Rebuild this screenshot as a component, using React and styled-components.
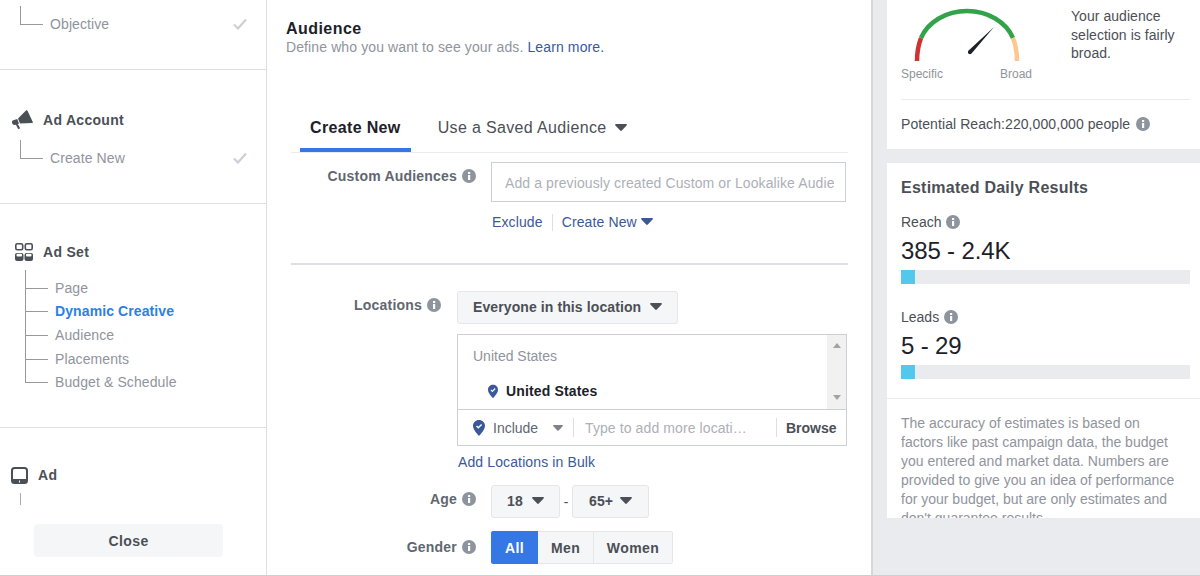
import React from "react";
import styled, { createGlobalStyle } from "styled-components";

const GlobalStyle = createGlobalStyle`
  html, body {
    margin: 0;
    padding: 0;
    height: 576px;
    overflow: hidden;
    background: #fff;
    font-family: "Liberation Sans", Arial, sans-serif;
    font-size: 14px;
  }
  * { box-sizing: border-box; }
`;

const Page = styled.div`
  display: flex;
  width: 1200px;
  height: 576px;
  border-bottom: 1px solid #ccd0d5;
  overflow: hidden;
`;

/* left steps column */
const Sidebar = styled.aside`
  width: 267px;
  flex: none;
  border-right: 1px solid #dddfe2;
`;

const Section = styled.section`
  height: ${(props) => props.$height}px;
  padding-top: ${(props) => props.$top}px;
  border-bottom: ${(props) => (props.$last ? "none" : "1px solid #dddfe2")};
`;

const StepHead = styled.div`
  display: flex;
  align-items: center;
  height: 20px;
  padding-left: ${(props) => props.$left}px;
  gap: ${(props) => props.$gap}px;
  font-size: 14px;
  font-weight: 700;
  letter-spacing: 0.3px;
  color: #4b4f56;
`;

const Tree = styled.div`
  margin-top: ${(props) => props.$top || 0}px;
  padding-left: ${(props) => props.$left}px;
`;

const TreeRow = styled.div`
  display: flex;
  height: ${(props) => props.$step}px;
`;

const Elbow = styled.span`
  width: 23px;
  flex: none;
  border-left: 1px solid #999;
  border-bottom: 1px solid #999;
`;

const TreeLabel = styled.span`
  align-self: flex-end;
  flex: 1;
  display: flex;
  justify-content: space-between;
  align-items: center;
  height: 18px;
  margin-bottom: -8px;
  padding-left: ${(props) => props.$indent}px;
  padding-right: ${(props) => (props.$check ? 19 : 0)}px;
  color: ${(props) => (props.$active ? "#2c7fe5" : "#90949c")};
  font-weight: ${(props) => (props.$active ? 700 : 400)};
  letter-spacing: 0.1px;
`;

const Stub = styled.div`
  width: 1px;
  height: 12px;
  margin: 8px 0 0 20px;
  background: #aaa;
`;

const CloseButton = styled.div`
  display: flex;
  align-items: center;
  justify-content: center;
  width: 189px;
  height: 33px;
  margin: 19px 0 0 34px;
  border-radius: 4px;
  background: #f5f6f7;
  font-weight: 700;
  letter-spacing: 0.4px;
  color: #4b4f56;
`;

/* middle form */
const Main = styled.main`
  width: 604px;
  flex: none;
  padding: 19px 23px 0 24px;
`;

const Title = styled.h2`
  margin: 0 0 0 -5px;
  font-size: 16px;
  line-height: 20px;
  font-weight: 700;
  letter-spacing: 0.45px;
  color: #1d2129;
`;

const Subtitle = styled.p`
  margin: -1px 0 0 -5px;
  line-height: 18px;
  letter-spacing: 0.11px;
  color: #90949c;
`;

const Link = styled.a`
  display: inline-flex;
  align-items: center;
  gap: 4px;
  letter-spacing: 0.12px;
  color: #3b5998;
`;

const Tabs = styled.nav`
  display: flex;
  align-items: stretch;
  gap: 17px;
  margin-top: 49px;
  padding-left: 9px;
  border-bottom: 1px solid #e9ebee;
`;

const Tab = styled.div`
  display: flex;
  align-items: center;
  gap: 8px;
  height: 47px;
  padding: 2px 10px 0;
  border-bottom: 4px solid ${(props) => (props.$active ? "#3578e5" : "transparent")};
  font-size: 16px;
  letter-spacing: 0.35px;
  font-weight: ${(props) => (props.$active ? 700 : 400)};
  color: ${(props) => (props.$active ? "#1d2129" : "#4b4f56")};
`;

const Field = styled.div`
  display: flex;
  align-items: flex-start;
  margin-top: ${(props) => props.$top}px;
`;

const FieldLabel = styled.div`
  display: flex;
  align-items: center;
  justify-content: flex-end;
  gap: 5px;
  width: ${(props) => props.$width}px;
  height: 20px;
  flex: none;
  margin-top: ${(props) => props.$offset || 4}px;
  margin-right: ${(props) => props.$gap}px;
  font-size: 14px;
  font-weight: 700;
  letter-spacing: 0.2px;
  color: #606770;
`;

const Control = styled.div`
  display: flex;
  flex-direction: column;
  align-items: flex-start;
`;

const TextBox = styled.div`
  width: 355px;
  height: 40px;
  padding: 1px 11px 0 13px;
  border: 1px solid #c9d0dc;
  line-height: 38px;
`;

const TextClip = styled.div`
  white-space: nowrap;
  overflow: hidden;
  letter-spacing: 0.1px;
  color: #adb0b6;
`;

const LinkRow = styled.div`
  display: flex;
  align-items: center;
  height: 20px;
  margin-top: 10px;
  padding-left: 1px;
`;

const LinkSep = styled.span`
  width: 1px;
  height: 17px;
  margin: 0 9px;
  background: #dddfe2;
`;

const FormRule = styled.hr`
  height: 2px;
  margin: 31px 0 0;
  border: none;
  background: #dddfe2;
`;

const SelectButton = styled.div`
  display: flex;
  align-items: center;
  justify-content: space-between;
  width: ${(props) => props.$width}px;
  height: 33px;
  padding: 0 ${(props) => props.$pad}px 1px;
  border: 1px solid #e4e6e9;
  border-radius: 3px;
  background: #f5f6f7;
  font-weight: 700;
  letter-spacing: 0.1px;
  color: #4b4f56;
`;

const LocationBox = styled.div`
  width: 390px;
  height: 112px;
  margin-top: 10px;
  border: 1px solid #ccd0d5;
  border-bottom-color: #c9d0dc;
`;

const LocationTop = styled.div`
  display: flex;
  height: 75px;
  border-bottom: 1px solid #ccd0d5;
`;

const LocationList = styled.div`
  flex: 1;
  padding: 13px 0 0 15px;
`;

const ListCaption = styled.div`
  line-height: 16px;
  color: #90949c;
`;

const ListItem = styled.div`
  display: flex;
  align-items: center;
  gap: 8px;
  height: 18px;
  margin-top: 18px;
  padding-left: 15px;
  font-weight: 700;
  letter-spacing: 0.15px;
  color: #1d2129;
`;

const Scrollbar = styled.div`
  display: flex;
  flex-direction: column;
  align-items: center;
  justify-content: space-between;
  width: 19px;
  padding: 8px 0 9px;
  background: #f1f1f1;
`;

const LocationBottom = styled.div`
  display: flex;
  align-items: center;
  height: 35px;
  padding-left: 15px;
  color: #606770;
`;

const IncludeLabel = styled.span`
  margin-left: 8px;
  width: 60px;
`;

const RowSep = styled.span`
  width: 1px;
  height: 19px;
  margin: ${(props) => props.$margin};
  background: #dddfe2;
`;

const Placeholder = styled.span`
  width: 165px;
  white-space: nowrap;
  overflow: hidden;
  text-overflow: ellipsis;
  letter-spacing: 0.1px;
  color: #adb0b6;
`;

const Browse = styled.span`
  font-weight: 700;
  color: #4b4f56;
`;

const BulkLink = styled(Link)`
  height: 20px;
  margin: 6px 0 0 1px;
`;

const AgeRow = styled.div`
  display: flex;
  align-items: center;
`;

const Dash = styled.span`
  width: 12px;
  text-align: center;
  color: #4b4f56;
`;

const Segments = styled.div`
  display: flex;
  height: 33px;
  border-radius: 3px;
  overflow: hidden;
`;

const Segment = styled.div`
  display: flex;
  align-items: center;
  justify-content: center;
  width: ${(props) => props.$width}px;
  border: 1px solid ${(props) => (props.$active ? "#3578e5" : "#e4e6e9")};
  border-left-width: ${(props) => (props.$active ? 1 : 0)}px;
  background: ${(props) => (props.$active ? "#3578e5" : "#f5f6f7")};
  font-weight: 700;
  letter-spacing: 0.4px;
  color: ${(props) => (props.$active ? "#fff" : "#4b4f56")};
`;

/* right summary column */
const Summary = styled.aside`
  flex: 1;
  padding-left: 14px;
  border-left: 2px solid #d5d7db;
  background: #e9ebee;
`;

const Card = styled.div`
  height: ${(props) => props.$height}px;
  margin-bottom: 14px;
  background: #fff;
  overflow: hidden;
`;

const GaugeRow = styled.div`
  display: flex;
  height: 100px;
  margin: 0 10px 0 14px;
  border-bottom: 1px solid #e9ebee;
`;

const GaugeCol = styled.div`
  width: 130px;
  flex: none;
`;

const GaugeLabels = styled.div`
  display: flex;
  justify-content: space-between;
  width: 131px;
  margin-top: 1px;
  font-size: 12px;
  line-height: 14px;
  color: #90949c;
`;

const GaugeText = styled.p`
  margin: 7px 0 0 40px;
  font-size: 14px;
  line-height: 18.5px;
  letter-spacing: 0.05px;
  color: #4b4f56;
`;

const ReachLine = styled.div`
  display: flex;
  align-items: center;
  gap: 6px;
  height: 48px;
  padding-left: 14px;
  letter-spacing: 0.08px;
  color: #4b4f56;
`;

const CardTitle = styled.h3`
  margin: 0;
  padding: 15px 0 0 14px;
  font-size: 16px;
  line-height: 20px;
  font-weight: 700;
  letter-spacing: 0.25px;
  color: #4b4f56;
`;

const Metric = styled.div`
  padding: ${(props) => props.$top}px 10px 0 14px;
`;

const MetricLabel = styled.div`
  display: flex;
  align-items: center;
  gap: 5px;
  line-height: 16px;
  color: #4b4f56;
`;

const MetricValue = styled.div`
  margin-top: 6px;
  font-size: 24px;
  line-height: 30px;
  letter-spacing: -0.15px;
  color: #1d2129;
`;

const Bar = styled.div`
  height: 14px;
  margin-top: 4px;
  background: #e9ebee;
`;

const BarFill = styled.div`
  width: 14px;
  height: 100%;
  background: #54c7ec;
`;

const Note = styled.p`
  margin: 19px 0 0;
  padding: 15px 19px 0 14px;
  border-top: 1px solid #e9ebee;
  line-height: 19px;
  color: #90949c;
`;

const Info = () => (
  <svg width="14" height="14" viewBox="0 0 14 14" style={{ flex: "none" }}>
    <circle cx="7" cy="7" r="7" fill="#8d949e" />
    <rect x="6" y="6" width="2.2" height="5" fill="#fff" />
    <rect x="6" y="3" width="2.2" height="2" fill="#fff" />
  </svg>
);

const Caret = ({ color = "#4b4f56", width = 12 }) => (
  <svg width={width} height={width * 0.6} viewBox="0 0 12 7.2" style={{ flex: "none" }}>
    <path d="M1 0h10c1 0 1.2.8.6 1.4L6.8 6.6c-.4.5-1.2.5-1.6 0L.4 1.4C-.2.8 0 0 1 0z" fill={color} />
  </svg>
);

const Check = () => (
  <svg width="14" height="12" viewBox="0 0 14 12">
    <path d="M1 6.500l4 4L13 1.500" fill="none" stroke="#ccd0d5" strokeWidth="2.2" />
  </svg>
);

const Pin = ({ width = 12, height = 16 }) => (
  <svg width={width} height={height} viewBox="0 0 12 16" style={{ flex: "none" }}>
    <path d="M6 0C2.700 0 0 2.500 0 5.800 0 9.600 4 13.600 6 16c2-2.400 6-6.400 6-10.200C12 2.500 9.300 0 6 0z" fill="#3b5998" />
    <path d="M3.500 6l1.800 1.800L8.600 4.400" fill="none" stroke="#fff" strokeWidth="1.400" />
  </svg>
);

const Megaphone = () => (
  <svg width="21" height="20" viewBox="0 0 21 20" style={{ flex: "none" }}>
    <path d="M14 0.500c.6-.5 1.300-.3 1.600.4L20.800 12c.2.600-.2 1-.8 1L8 13.500 6 8.500z" fill="#4b4f56" />
    <path d="M5.200 9L7 13.500 5.500 14.200l.9.800 1.700 3.300-1.800 1-2.400-4.500-1.400.2C1.200 14.800.3 13.900 0 12.700-.2 11.600.3 10.700 1.300 10.300z" fill="#4b4f56" />
  </svg>
);

const GridIcon = () => (
  <svg width="18" height="18" viewBox="0 0 18 18" style={{ flex: "none" }}>
    <g fill="none" stroke="#4b4f56" strokeWidth="1.600">
      <rect x="0.800" y="0.800" width="6.900" height="6" rx="1.500" />
      <rect x="10.300" y="0.800" width="6.900" height="6" rx="1.500" />
    </g>
    <rect x="0" y="10" width="8.500" height="8" rx="2" fill="#4b4f56" />
    <rect x="9.500" y="10" width="8.500" height="8" rx="2" fill="#4b4f56" />
    <rect x="1.500" y="10.800" width="5.500" height="2.600" rx="1" fill="#fff" />
    <rect x="11" y="10.800" width="5.500" height="2.600" rx="1" fill="#fff" />
  </svg>
);

const TabletIcon = () => (
  <svg width="17" height="17" viewBox="0 0 17 17" style={{ flex: "none" }}>
    <rect x="1" y="1" width="15" height="15" rx="2.500" fill="none" stroke="#4b4f56" strokeWidth="2" />
    <rect x="1" y="12" width="15" height="4" rx="1" fill="#4b4f56" />
    <rect x="8" y="13.500" width="1" height="2" fill="#fff" />
  </svg>
);

const ArrowUp = () => (
  <svg width="8" height="5" viewBox="0 0 8 5"><path d="M4 0l4 5H0z" fill="#a3a3a3" /></svg>
);

const ArrowDown = () => (
  <svg width="8" height="5" viewBox="0 0 8 5"><path d="M4 5l4-5H0z" fill="#a3a3a3" /></svg>
);

const Gauge = () => (
  <svg width="130" height="66" viewBox="0 0 130 66" style={{ display: "block" }}>
    <g fill="none" strokeWidth="4.500">
      <path d="M16 61C16 54 17 46 20 38" stroke="#d03232" />
      <path d="M20 38C27 22 45 11 66 11S105 22 112 38" stroke="#33a34a" />
      <path d="M112 38C115 46 116 54 116 61" stroke="#fdc88f" />
    </g>
    <path d="M93 27L70.500 53.500C69 55 66.500 54 67 51.500 67.500 50.500 68 50 69 49.300z" fill="#1d2129" />
  </svg>
);

const App = () => {
  return (
    <>
      <GlobalStyle />
      <Page>
        <Sidebar>
          <Section $height={70} $top={6}>
            <Tree $left={20}>
              <TreeRow $step={19}>
                <Elbow />
                <TreeLabel $indent={7} $check>
                  Objective <Check />
                </TreeLabel>
              </TreeRow>
            </Tree>
          </Section>
          <Section $height={134} $top={40}>
            <StepHead $left={12} $gap={10}>
              <Megaphone /> Ad Account
            </StepHead>
            <Tree $left={20} $top={10}>
              <TreeRow $step={19}>
                <Elbow />
                <TreeLabel $indent={7} $check>
                  Create New <Check />
                </TreeLabel>
              </TreeRow>
            </Tree>
          </Section>
          <Section $height={224} $top={38}>
            <StepHead $left={15} $gap={10}>
              <GridIcon /> Ad Set
            </StepHead>
            <Tree $left={25} $top={8}>
              <TreeRow $step={19}>
                <Elbow />
                <TreeLabel $indent={7}>Page</TreeLabel>
              </TreeRow>
              <TreeRow $step={23}>
                <Elbow />
                <TreeLabel $indent={7} $active>Dynamic Creative</TreeLabel>
              </TreeRow>
              <TreeRow $step={24}>
                <Elbow />
                <TreeLabel $indent={7}>Audience</TreeLabel>
              </TreeRow>
              <TreeRow $step={24}>
                <Elbow />
                <TreeLabel $indent={7}>Placements</TreeLabel>
              </TreeRow>
              <TreeRow $step={23}>
                <Elbow />
                <TreeLabel $indent={7}>Budget &amp; Schedule</TreeLabel>
              </TreeRow>
            </Tree>
          </Section>
          <Section $height={147} $top={37} $last>
            <StepHead $left={11} $gap={10}>
              <TabletIcon /> Ad
            </StepHead>
            <Stub />
            <CloseButton>Close</CloseButton>
          </Section>
        </Sidebar>

        <Main>
          <Title>Audience</Title>
          <Subtitle>
            Define who you want to see your ads. <Link>Learn more.</Link>
          </Subtitle>

          <Tabs>
            <Tab $active>Create New</Tab>
            <Tab>
              Use a Saved Audience <Caret />
            </Tab>
          </Tabs>

          <Field $top={9}>
            <FieldLabel $width={185} $gap={15}>
              Custom Audiences <Info />
            </FieldLabel>
            <Control>
              <TextBox>
                <TextClip>Add a previously created Custom or Lookalike Audience</TextClip>
              </TextBox>
              <LinkRow>
                <Link>Exclude</Link>
                <LinkSep />
                <Link>
                  Create New <Caret color="#3b5998" />
                </Link>
              </LinkRow>
            </Control>
          </Field>

          <FormRule />

          <Field $top={26}>
            <FieldLabel $width={150} $gap={16}>
              Locations <Info />
            </FieldLabel>
            <Control>
              <SelectButton $width={221} $pad={15}>
                Everyone in this location <Caret />
              </SelectButton>
              <LocationBox>
                <LocationTop>
                  <LocationList>
                    <ListCaption>United States</ListCaption>
                    <ListItem>
                      <Pin width={10} height={15} /> United States
                    </ListItem>
                  </LocationList>
                  <Scrollbar>
                    <ArrowUp />
                    <ArrowDown />
                  </Scrollbar>
                </LocationTop>
                <LocationBottom>
                  <Pin />
                  <IncludeLabel>Include</IncludeLabel>
                  <Caret color="#7f8389" width={10} />
                  <RowSep $margin="0 11px 0 10px" />
                  <Placeholder>Type to add more locations</Placeholder>
                  <RowSep $margin="0 9px 0 26px" />
                  <Browse>Browse</Browse>
                </LocationBottom>
              </LocationBox>
              <BulkLink>Add Locations in Bulk</BulkLink>
            </Control>
          </Field>

          <Field $top={13}>
            <FieldLabel $width={185} $gap={15}>
              Age <Info />
            </FieldLabel>
            <AgeRow>
              <SelectButton $width={69} $pad={15}>
                18 <Caret />
              </SelectButton>
              <Dash>-</Dash>
              <SelectButton $width={77} $pad={16}>
                65+ <Caret />
              </SelectButton>
            </AgeRow>
          </Field>

          <Field $top={13}>
            <FieldLabel $width={185} $gap={15} $offset={6}>
              Gender <Info />
            </FieldLabel>
            <Segments>
              <Segment $width={47} $active>All</Segment>
              <Segment $width={56}>Men</Segment>
              <Segment $width={79}>Women</Segment>
            </Segments>
          </Field>
        </Main>

        <Summary>
          <Card $height={149}>
            <GaugeRow>
              <GaugeCol>
                <Gauge />
                <GaugeLabels>
                  <span>Specific</span>
                  <span>Broad</span>
                </GaugeLabels>
              </GaugeCol>
              <GaugeText>
                Your audience
                <br />
                selection is fairly
                <br />
                broad.
              </GaugeText>
            </GaugeRow>
            <ReachLine>
              Potential Reach:220,000,000 people <Info />
            </ReachLine>
          </Card>
          <Card $height={355}>
            <CardTitle>Estimated Daily Results</CardTitle>
            <Metric $top={16}>
              <MetricLabel>
                Reach <Info />
              </MetricLabel>
              <MetricValue>385 - 2.4K</MetricValue>
              <Bar>
                <BarFill />
              </Bar>
            </Metric>
            <Metric $top={25}>
              <MetricLabel>
                Leads <Info />
              </MetricLabel>
              <MetricValue>5 - 29</MetricValue>
              <Bar>
                <BarFill />
              </Bar>
            </Metric>
            <Note>
              The accuracy of estimates is based on factors like past campaign data, the budget you
              entered and market data. Numbers are provided to give you an idea of performance for
              your budget, but are only estimates and don't guarantee results.
            </Note>
          </Card>
        </Summary>
      </Page>
    </>
  );
};

export default App;
